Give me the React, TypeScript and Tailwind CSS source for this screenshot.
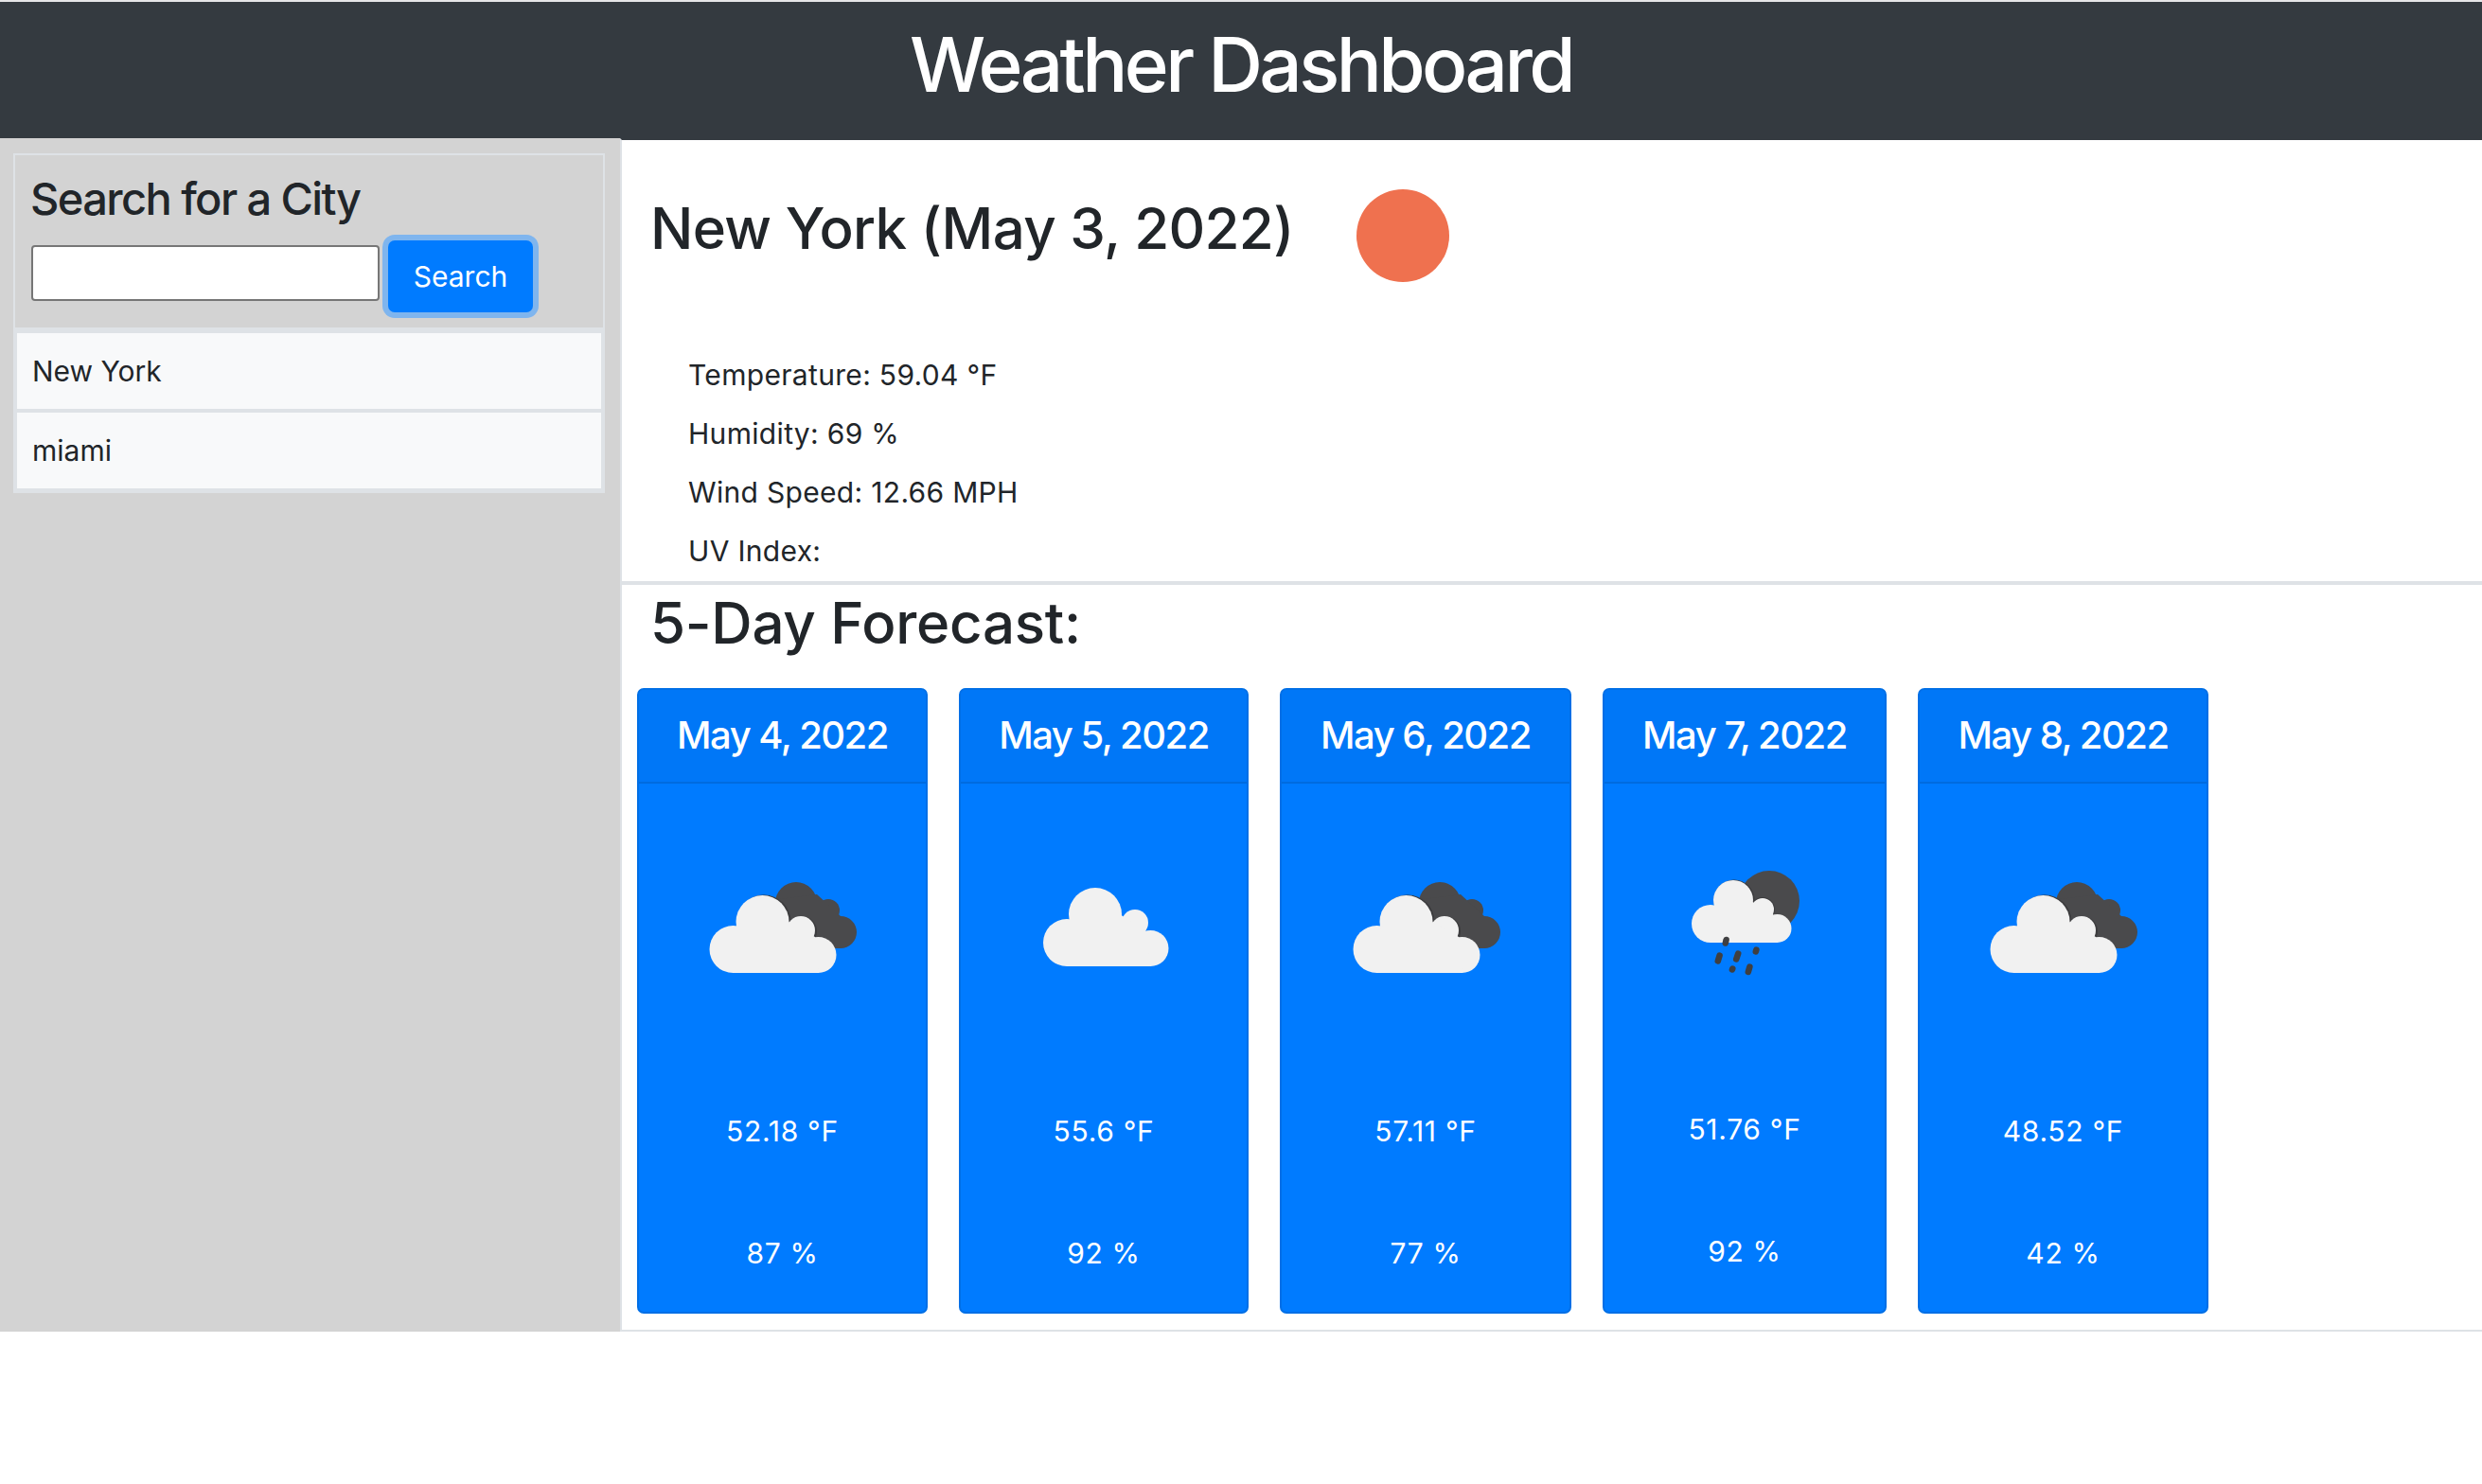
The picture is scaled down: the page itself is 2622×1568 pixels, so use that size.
const cityHistory = ["New York", "miami"];

const currentStats = ["Temperature: 59.04 °F", "Humidity: 69 %", "Wind Speed: 12.66 MPH", "UV Index:"];

type IconKind = "overcast" | "cloud" | "rain";

interface ForecastDay {
  date: string;
  temp: string;
  humidity: string;
  icon: IconKind;
  width: string;
  bodyTop: string;
}

const forecast: ForecastDay[] = [
  { date: "May 4, 2022", temp: "52.18 °F", humidity: "87 %", icon: "overcast", width: "w-[307px]", bodyTop: "pt-[72px]" },
  { date: "May 5, 2022", temp: "55.6 °F", humidity: "92 %", icon: "cloud", width: "w-[306px]", bodyTop: "pt-[72px]" },
  { date: "May 6, 2022", temp: "57.11 °F", humidity: "77 %", icon: "overcast", width: "w-[308px]", bodyTop: "pt-[72px]" },
  { date: "May 7, 2022", temp: "51.76 °F", humidity: "92 %", icon: "rain", width: "w-[300px]", bodyTop: "pt-[70px]" },
  { date: "May 8, 2022", temp: "48.52 °F", humidity: "42 %", icon: "overcast", width: "w-[307px]", bodyTop: "pt-[72px]" },
];

const LIGHT = "#f1f1f1";
const DARK = "#4a4a4c";

function WeatherIcon({ kind }: { kind: IconKind }) {
  return (
    <svg className="w-[167px] h-[167px] shrink-0" viewBox="0 0 167 167">
      {kind === "overcast" && (
        <>
          <g fill={DARK}>
            <circle cx="98" cy="54" r="22" />
            <circle cx="132" cy="62" r="12" />
            <circle cx="145" cy="85" r="17" />
            <path d="M80 50 L120 45 L145 68 L145 102 L125 102 Z" />
          </g>
          <g fill="#3c3c3e">
            <circle cx="64" cy="74" r="28.5" />
            <circle cx="104" cy="84" r="16" />
          </g>
          <g fill={LIGHT}>
            <circle cx="31.5" cy="103" r="25" />
            <circle cx="62.5" cy="74" r="28" />
            <circle cx="103" cy="83" r="15" />
            <circle cx="121.5" cy="109" r="19" />
            <path d="M31 128 L31 90 L40 74 L90 74 L118 90 L122 128 Z" />
          </g>
        </>
      )}
      {kind === "cloud" && (
        <g fill={LIGHT}>
          <circle cx="44" cy="96" r="25" />
          <circle cx="74" cy="66" r="28" />
          <circle cx="116" cy="75" r="14" />
          <circle cx="132.5" cy="102" r="19" />
          <path d="M44 121 L44 84 L50 66 L100 66 L128 84 L132 121 Z" />
        </g>
      )}
      {kind === "rain" && (
        <>
          <circle cx="109" cy="54" r="32" fill={DARK} />
          <g fill="#3c3c3e">
            <circle cx="72" cy="53" r="21.5" />
            <circle cx="102" cy="63" r="13" />
          </g>
          <g fill={LIGHT}>
            <circle cx="47" cy="78" r="20" />
            <circle cx="71" cy="53" r="21" />
            <circle cx="102" cy="63" r="12" />
            <circle cx="117.5" cy="83" r="15" />
            <path d="M47 98 L47 65 L55 53 L88 53 L113 68 L118 98 Z" />
          </g>
          <g stroke="#3f3f41" strokeWidth="6.5" strokeLinecap="round">
            <path d="M63.6 95 L62.8 98.5" />
            <path d="M56.6 111.5 L54.8 117.5" />
            <path d="M76.2 109.5 L74.2 115.5" />
            <path d="M95.4 105.5 L94.8 107.5" />
            <path d="M70.3 125.5 L69.9 126.5" />
            <path d="M88.4 123.5 L86.8 129" />
          </g>
        </>
      )}
    </svg>
  );
}

function ForecastCard({ day }: { day: ForecastDay }) {
  return (
    <div className={`${day.width} flex flex-col rounded-[7px] border-2 border-[#006fe6] bg-[#007bff] text-white overflow-hidden`}>
      <div className="h-[99px] shrink-0 flex items-center justify-center border-b-2 border-[#006bdf] bg-[#0077f7] pb-[1px]">
        <h4 className="text-[40px] leading-[48px] font-medium tracking-[-1.5px]">{day.date}</h4>
      </div>
      <div className={`flex flex-col items-center pb-[42px] ${day.bodyTop}`}>
        <WeatherIcon kind={day.icon} />
        <p className="mt-[108px] text-[30px] leading-[40px] tracking-[0.7px]">{day.temp}</p>
        <p className="mt-[89px] text-[30px] leading-[40px] tracking-[0.7px]">{day.humidity}</p>
      </div>
    </div>
  );
}

export default function App() {
  return (
    <div className="min-h-[1568px] bg-white text-[#212529] font-['Inter',sans-serif]">
      <header className="h-[146px] flex items-center justify-center border-t-2 border-[#e6e6e8] bg-[#343a40] pb-[12px]">
        <h1 className="text-[80px] leading-[96px] font-medium text-white tracking-[-3.6px]">Weather Dashboard</h1>
      </header>

      <div className="flex h-[1261px]">
        <aside className="w-[655px] shrink-0 bg-[#d3d3d3] pl-[14px] pt-[16px]">
          <div className="w-[625px] border-2 border-[#dee2e6]">
            <div className="h-[182px] pl-[17px] pt-[18px]">
              <h3 className="-ml-[1px] text-[47px] leading-[56px] font-medium tracking-[-1.6px]">Search for a City</h3>
              <form className="flex items-start">
                <input className="mt-[21px] w-[368px] h-[59px] rounded-[4px] border-2 border-[#767676] bg-white" type="text" />
                <button
                  type="button"
                  className="mt-[16px] ml-[9px] w-[153px] h-[76px] rounded-[7px] bg-[#007bff] text-white text-[30px] ring-[6px] ring-[#7fb5ee]"
                >
                  Search
                </button>
              </form>
            </div>
            <ul className="flex flex-col gap-[4px] bg-[#dee2e6] px-[2px] pt-[6px] pb-[3px]">
              {cityHistory.map((city) => (
                <li key={city} className="h-[80px] flex items-center bg-[#f8f9fa] pl-[16px] text-[30px]">
                  {city}
                </li>
              ))}
            </ul>
          </div>
        </aside>

        <main className="flex-1 border-l-2 border-t-2 border-b-2 border-l-[#dee2e6] border-t-[#343a40] border-b-[#dee2e6]">
          <section className="h-[470px] border-b-4 border-[#dee2e6]">
            <div className="flex items-start pl-[30px] pt-[57px]">
              <h2 className="text-[60px] leading-[72px] font-medium tracking-[-0.67px]">New York (May 3, 2022)</h2>
              <div className="ml-[66px] -mt-[5px] w-[98px] h-[98px] rounded-full bg-[#ef714f]" />
            </div>
            <div className="pl-[70px] pt-[78px]">
              {currentStats.map((stat) => (
                <p key={stat} className="mb-[22px] text-[30px] leading-[40px] tracking-[0.32px]">
                  {stat}
                </p>
              ))}
            </div>
          </section>

          <h2 className="pl-[30px] pt-[4px] text-[60px] leading-[72px] font-medium tracking-[-0.25px]">5-Day Forecast:</h2>

          <div className="flex gap-[33px] pl-[16px] pt-[33px]">
            {forecast.map((day) => (
              <ForecastCard key={day.date} day={day} />
            ))}
          </div>
        </main>
      </div>
    </div>
  );
}
